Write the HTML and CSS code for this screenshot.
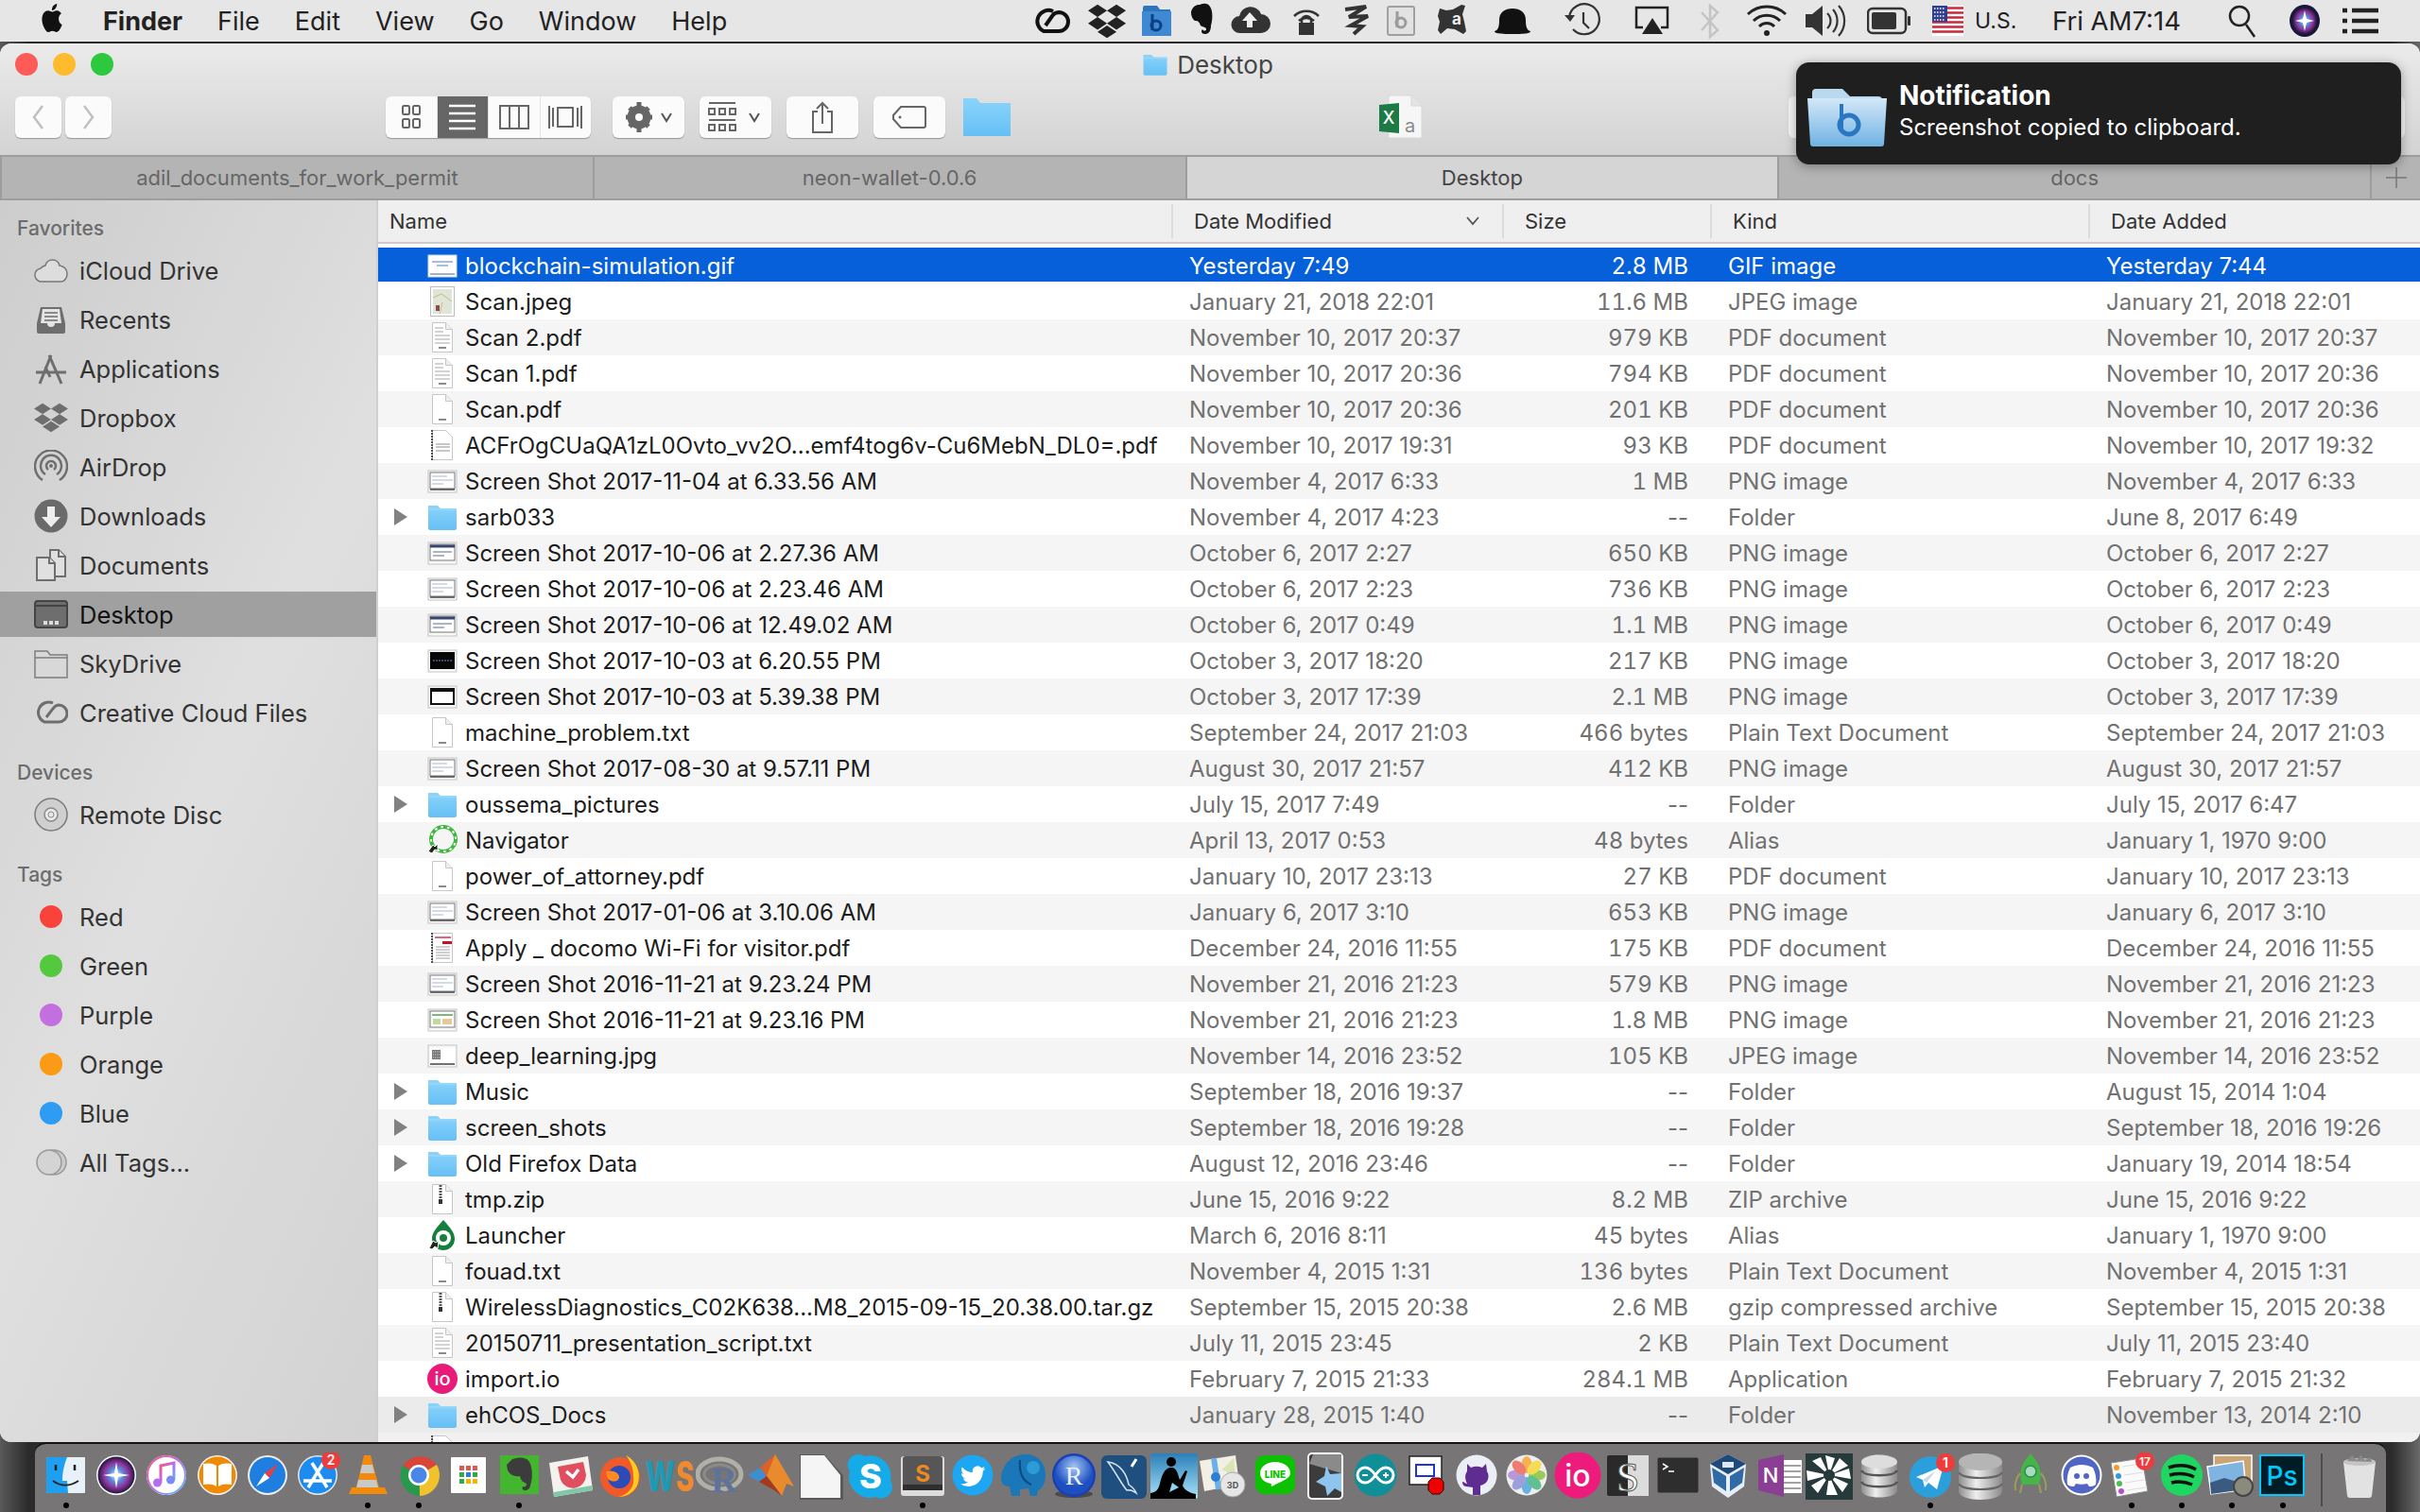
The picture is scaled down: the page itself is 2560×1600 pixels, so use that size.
FILE: index.html
```html
<!DOCTYPE html>
<html lang="en">
<head>
    <meta charset="UTF-8">
    <title>Desktop</title>
    <link rel="stylesheet" href="styles.css">
</head>
<body>
<svg class="defs" width="0" height="0">
    <defs>
        <linearGradient id="g-folder" x1="0" y1="0" x2="0" y2="1"><stop offset="0" stop-color="#8ad4fb"/><stop offset="1" stop-color="#66bff5"/></linearGradient>
        <linearGradient id="g-banner" x1="0" y1="0" x2="0" y2="1"><stop offset="0" stop-color="#d3e8f7"/><stop offset="1" stop-color="#6fb2e4"/></linearGradient>
        <linearGradient id="g-silver" x1="0" y1="0" x2="1" y2="0"><stop offset="0" stop-color="#8d8d8d"/><stop offset=".4" stop-color="#efefef"/><stop offset="1" stop-color="#8a8a8a"/></linearGradient>
        <linearGradient id="g-ring" x1="0" y1="0" x2="1" y2="1"><stop offset="0" stop-color="#f7567a"/><stop offset=".5" stop-color="#b76cf0"/><stop offset="1" stop-color="#4fc3f7"/></linearGradient>
        <linearGradient id="g-sky" x1="0" y1="0" x2="0" y2="1"><stop offset="0" stop-color="#2b7fb8"/><stop offset="1" stop-color="#a9e4fb"/></linearGradient>
        <radialGradient id="g-siri"><stop offset="0" stop-color="#eaf6ff"/><stop offset=".35" stop-color="#5a8fe0"/><stop offset=".7" stop-color="#8c2f96"/><stop offset="1" stop-color="#1c1a3a"/></radialGradient>
        <radialGradient id="g-rball" cx=".5" cy=".3"><stop offset="0" stop-color="#a8c8f5"/><stop offset="1" stop-color="#1d4fc0"/></radialGradient>
    </defs>
    <symbol id="folder" viewBox="0 0 36 36"><path d="M3 6h10l3 3h17v21a2 2 0 0 1-2 2H5a2 2 0 0 1-2-2z" fill="url(#g-folder)"/><path d="M3 10h30" stroke="#a5dcfb" stroke-width="1"/></symbol>
    <symbol id="doc" viewBox="0 0 36 36"><path d="M7.500 2.500h14l7 7v24h-21z" fill="#fff" stroke="#c6c6c6"/><path d="M21.500 2.500v7h7" fill="#efefef" stroke="#c6c6c6"/><path d="M14 29h8" stroke="#8a8a8a" stroke-width="2"/></symbol>
    <symbol id="doc-text" viewBox="0 0 36 36"><path d="M7.500 2.500h14l7 7v24h-21z" fill="#fff" stroke="#c6c6c6"/><path d="M21.500 2.500v7h7" fill="#efefef" stroke="#c6c6c6"/><path d="M10 8h9M10 12h9M10 16h16M10 20h16M10 24h16" stroke="#a6a6a6"/><path d="M14 29h8" stroke="#8a8a8a" stroke-width="2"/></symbol>
    <symbol id="doc-bound" viewBox="0 0 36 36"><path d="M7.500 2.500h14l7 7v24h-21z" fill="#fff" stroke="#c6c6c6"/><path d="M7 2v32" stroke="#222" stroke-width="1.500" stroke-dasharray="2 1"/><path d="M11 17h15M11 20h15M11 24h15" stroke="#8f8f8f"/></symbol>
    <symbol id="doc-red" viewBox="0 0 36 36"><path d="M7.500 2.500h21v31h-21z" fill="#fff" stroke="#c6c6c6"/><path d="M7 2v32" stroke="#222" stroke-width="1.500" stroke-dasharray="2 1"/><path d="M10 6h17v2H10z" fill="#e0657a"/><path d="M18 11h10v3H18z" fill="#c8102e"/><path d="M11 17h15M11 20h15M11 23h15M11 26h15M11 29h15" stroke="#a0a0a0"/></symbol>
    <symbol id="zip" viewBox="0 0 36 36"><path d="M7.500 2.500h14l7 7v24h-21z" fill="#fff" stroke="#c6c6c6"/><path d="M21.500 2.500v7h7" fill="#efefef" stroke="#c6c6c6"/><path d="M16 3v19" stroke="#555" stroke-width="3" stroke-dasharray="2 1"/><rect x="14" y="18" width="4" height="5" fill="#333"/></symbol>
    <symbol id="shot" viewBox="0 0 36 36"><rect x="3" y="7" width="30" height="23" fill="#f7f7f7" stroke="#c4c4c4"/><rect x="5" y="9" width="26" height="17" fill="#fff" stroke="#777"/><path d="M7 13h16M7 17h22M7 21h12" stroke="#d3dbe8" stroke-width="2"/><path d="M5 27h26" stroke="#444" stroke-width="1.500"/></symbol>
    <symbol id="shot-blue" viewBox="0 0 36 36"><rect x="3" y="7" width="30" height="23" fill="#f7f7f7" stroke="#c4c4c4"/><rect x="5" y="9" width="26" height="17" fill="#fff" stroke="#777"/><path d="M5 11h26" stroke="#39456f" stroke-width="3"/><path d="M8 17h20M8 21h12" stroke="#aab4c8" stroke-width="2"/></symbol>
    <symbol id="shot-dark" viewBox="0 0 36 36"><rect x="3" y="7" width="30" height="23" fill="#f7f7f7" stroke="#c4c4c4"/><rect x="5" y="9" width="26" height="18" fill="#060606"/><path d="M8 18h20" stroke="#3a4a66" stroke-width="2" stroke-dasharray="2 1"/></symbol>
    <symbol id="shot-frame" viewBox="0 0 36 36"><rect x="3" y="7" width="30" height="23" fill="#f7f7f7" stroke="#c4c4c4"/><rect x="6" y="10" width="24" height="16" fill="#fff" stroke="#111" stroke-width="2"/><path d="M6 12h24" stroke="#111" stroke-width="2"/></symbol>
    <symbol id="shot-green" viewBox="0 0 36 36"><rect x="3" y="7" width="30" height="23" fill="#f7f7f7" stroke="#c4c4c4"/><rect x="5" y="9" width="26" height="17" fill="#fff" stroke="#777"/><path d="M7 13h22" stroke="#7ab87a" stroke-width="2"/><path d="M8 17h8v6H8z" fill="#c2d99c"/><path d="M18 17h10v6H18z" fill="#e8c89a"/></symbol>
    <symbol id="shot-deep" viewBox="0 0 36 36"><rect x="3" y="7" width="30" height="23" fill="#f7f7f7" stroke="#c4c4c4"/><rect x="5" y="10" width="26" height="15" fill="#fff"/><path d="M7 12h9v10H7z" fill="#777"/><path d="M8 14h7M8 17h7M8 20h7" stroke="#ddd" stroke-dasharray="1 1"/><path d="M5 27h26" stroke="#444" stroke-width="1.500"/></symbol>
    <symbol id="gif" viewBox="0 0 36 36"><rect x="3" y="7" width="30" height="23" fill="#fff" stroke="#cfd7e8"/><path d="M7 14h22M12 18h12" stroke="#a9bde0" stroke-width="2"/><path d="M5 27h26" stroke="#8696b5" stroke-width="1.500"/></symbol>
    <symbol id="jpeg" viewBox="0 0 36 36"><rect x="5.500" y="2.500" width="25" height="31" fill="#fff" stroke="#bdbdbd"/><rect x="8" y="5" width="20" height="26" fill="#dfe6d5"/><path d="M8 14l9-4 11 8M15 31l3-12" fill="none" stroke="#c9b88f"/><rect x="11" y="22" width="4" height="6" fill="#8a4c52"/></symbol>
    <symbol id="navigator" viewBox="0 0 36 36"><circle cx="19" cy="17" r="13" fill="none" stroke="#3cb83c" stroke-width="4"/><circle cx="19" cy="17" r="13" fill="none" stroke="#fff" stroke-width="2" stroke-dasharray="2 3" pathLength="60" stroke-dashoffset="22"/><path d="M3 30l5-7 2 2 3-3v7l-3-1-3 4z" fill="#222" stroke="#fff"/></symbol>
    <symbol id="launcher" viewBox="0 0 36 36"><path d="M19 2c7 8 12 13 12 20a12 12 0 0 1-24 0c0-7 5-12 12-20z" fill="#15803d"/><circle cx="19" cy="21" r="8" fill="#fff"/><circle cx="19" cy="21" r="4" fill="#15803d"/><path d="M4 32l4-8 3 2 3-2-1 8-3-2-3 3z" fill="#222" stroke="#fff"/></symbol>
</svg>

<header class="menubar">
    <svg class="apple" width="26" height="30" viewBox="0 0 24 24" preserveAspectRatio="none"><path fill="#111" d="M12.152 6.896c-.948 0-2.415-1.078-3.96-1.04-2.04.027-3.91 1.183-4.961 3.014-2.117 3.675-.546 9.103 1.519 12.09 1.013 1.454 2.208 3.09 3.792 3.039 1.52-.065 2.09-.987 3.935-.987 1.831 0 2.35.987 3.96.948 1.637-.026 2.676-1.48 3.676-2.948 1.156-1.688 1.636-3.325 1.662-3.415-.039-.013-3.182-1.221-3.22-4.857-.026-3.04 2.48-4.494 2.597-4.559-1.429-2.09-3.623-2.324-4.39-2.376-2-.156-3.675 1.09-4.61 1.09zM15.53 3.83c.843-1.012 1.4-2.427 1.245-3.83-1.207.052-2.662.805-3.532 1.818-.78.896-1.454 2.338-1.273 3.714 1.338.104 2.715-.688 3.559-1.701"/></svg>
    <span class="menu-app">Finder</span>
    <span class="menu-item">File</span>
    <span class="menu-item">Edit</span>
    <span class="menu-item">View</span>
    <span class="menu-item">Go</span>
    <span class="menu-item">Window</span>
    <span class="menu-item">Help</span>

    <div class="status">
        <svg width="59" height="44" viewBox="0 0 59 44"><path d="M22 12A11 11 0 1 0 12 33h16a10 10 0 0 0 0-20 9 9 0 0 0-7 4l-7 10" fill="none" stroke="#111" stroke-width="4"/></svg>
        <svg width="57" height="44" viewBox="0 0 57 44"><path fill="#222" transform="translate(0 1.500) scale(1.670 1.750)" d="M6 1.807L0 5.629l6 3.822 6.001-3.822L6 1.807zM18 1.807l-6 3.822 6 3.822 6-3.822-6-3.822zM0 13.274l6 3.822 6.001-3.822L6 9.452l-6 3.822zM18 9.452l-6 3.822 6 3.822 6-3.822-6-3.822zM6 18.371l6.001 3.822 6-3.822-6-3.822L6 18.371z"/></svg>
        <svg width="49" height="44" viewBox="0 0 49 44"><path d="M1 8a2 2 0 0 1 2-2h13l3 4h11v27a1 1 0 0 1-1 1H1z" fill="#2f75bd"/><path d="M0 12h31v26H0z" fill="#3f88d2"/><path d="M11 15v17" stroke="#0c3f86" stroke-width="3"/><circle cx="15" cy="27" r="5" fill="none" stroke="#0c3f86" stroke-width="3"/></svg>
        <svg width="45" height="44" viewBox="0 0 45 44"><path d="M3 13c0-3 4-9 9-8 4-2 9-2 11 2 3 4 3 13 1 20 0 5-2 9-6 9-4 0-5-3-3-5 1 2 4 2 4 0 0-3-4-2-6-4-1-3-2-5-6-5-3-2-4-6-4-9z" fill="#111"/></svg>
        <svg width="65" height="44" viewBox="0 0 65 44"><path d="M10 35a9 9 0 0 1-1-18 12 12 0 0 1 23-2 10 10 0 0 1 0 20z" fill="#333"/><path d="M20 13l8 9h-5v7h-6v-7h-5z" fill="#eee"/></svg>
        <svg width="53" height="44" viewBox="0 0 53 44"><g fill="none" stroke="#333" stroke-width="2.500"><path d="M2 17a19 19 0 0 1 26 0M7 22a12 12 0 0 1 16 0"/><path d="M10 25v-3a5 5 0 0 1 10 0v3"/></g><rect x="7" y="24" width="16" height="13" fill="#333"/></svg>
        <svg width="47" height="44" viewBox="0 0 47 44"><path d="M3 10l22-3-18 11 20-1-18 10 12 1-9 8" fill="none" stroke="#333" stroke-width="4"/></svg>
        <svg width="52" height="44" viewBox="0 0 52 44"><rect x="1" y="7" width="28" height="30" rx="2" fill="#e2e2e2" stroke="#a0a0a0" stroke-width="2"/><path d="M11 12v17" stroke="#9b9b9b" stroke-width="3"/><circle cx="15" cy="24" r="5" fill="none" stroke="#9b9b9b" stroke-width="3"/></svg>
        <svg width="62" height="44" viewBox="0 0 62 44"><path d="M4 9l7 2 7-1 9-5 4 1-3 9 2 8 2 10-3 3-9-5-8-1-7 6-3-4 2-9-2-6z" fill="#333"/><text x="17" y="26" class="avast">a</text></svg>
        <svg width="74" height="44" viewBox="0 0 74 44"><path d="M0 33c4-1 5-5 5-12 0-8 6-12 14-12s14 4 14 12c0 7 1 11 5 12 0 2-3 3-19 3S0 35 0 33z" fill="#111"/></svg>
        <svg width="74" height="44" viewBox="0 0 74 44"><g fill="none" stroke="#333" stroke-width="2.200"><path d="M5 18a16 16 0 1 1 4 13"/><path d="M20 13v11l6 6"/></g><path d="M0 16h11l-5 7z" fill="#333"/></svg>
        <svg width="68" height="44" viewBox="0 0 68 44"><path d="M9 29H2V8h33v21h-7" fill="none" stroke="#222" stroke-width="2.500"/><path d="M19 19l11 17H8z" fill="#222"/></svg>
        <svg width="50" height="44" viewBox="0 0 50 44"><path d="M3 13l17 19-8 7V6l8 7L3 32" fill="none" stroke="#c4c4c4" stroke-width="2.500"/></svg>
        <svg width="62" height="44" viewBox="0 0 62 44"><g fill="none" stroke="#222" stroke-width="3"><path d="M2 15a29 29 0 0 1 40 0M8 22a20 20 0 0 1 28 0M14 28a11 11 0 0 1 16 0"/></g><circle cx="22" cy="35" r="3" fill="#222"/></svg>
        <svg width="66" height="44" viewBox="0 0 66 44"><path d="M1 15h7l11-9v32l-11-9H1z" fill="#333"/><g fill="none" stroke="#333" stroke-width="2.200"><path d="M24 14a11 11 0 0 1 0 16M30 10a18 18 0 0 1 0 24M36 6a24 24 0 0 1 0 32"/></g></svg>
        <svg width="69" height="44" viewBox="0 0 69 44"><rect x="1" y="9" width="40" height="26" rx="5" fill="none" stroke="#333" stroke-width="2.500"/><rect x="5" y="13" width="26" height="18" rx="2" fill="#333"/><rect x="43" y="17" width="3" height="10" rx="1" fill="#333"/></svg>
        <svg class="flag" width="33" height="32" viewBox="0 0 33 32"><rect width="33" height="32" fill="#fff"/><path d="M0 2.500h33M0 7.500h33M0 12.500h33M0 17.500h33M0 22.500h33M0 27.500h33" stroke="#c8283c" stroke-width="2.600"/><rect width="16" height="17" fill="#2f3f8e"/><path d="M2 3h12M2 7h12M2 11h12M2 15h12" stroke="#fff" stroke-width="1.400" stroke-dasharray="1.500 1.500"/></svg>
        <span class="menu-lang">U.S.</span>
        <span class="menu-clock">Fri AM7:14</span>
        <svg class="menu-search" width="30" height="36" viewBox="0 0 30 36"><g fill="none" stroke="#222" stroke-width="2.500"><circle cx="12" cy="13" r="10"/><path d="M19 22l9 13"/></g></svg>
        <svg class="menu-siri" width="34" height="36" viewBox="0 0 34 36"><ellipse cx="17" cy="18" rx="16" ry="17" fill="#18183a"/><ellipse cx="17" cy="18" rx="13" ry="14" fill="url(#g-siri)"/><path d="M17 7l2 9 8 2-8 2-2 9-2-9-8-2 8-2z" fill="#fff"/></svg>
        <svg class="menu-list" width="38" height="30" viewBox="0 0 38 30"><path d="M10 4h28M10 15h28M10 26h28" stroke="#222" stroke-width="4.500"/><path d="M0 4h5M0 15h5M0 26h5" stroke="#222" stroke-width="4.500"/></svg>
    </div>
</header>

<main class="window">
    <div class="titlebar">
        <div class="title-row">
            <div class="lights"><i class="light red"></i><i class="light yellow"></i><i class="light green"></i></div>
            <div class="title"><svg width="30" height="30"><use href="#folder"/></svg><span>Desktop</span></div>
        </div>
        <div class="toolbar">
            <div class="tool nav"><svg width="49" height="44" viewBox="0 0 49 44"><path d="M29 10L20 22l9 12" fill="none" stroke="#c0c0c0" stroke-width="2.500"/></svg></div>
            <div class="tool nav"><svg width="49" height="44" viewBox="0 0 49 44"><path d="M20 10l9 12-9 12" fill="none" stroke="#c0c0c0" stroke-width="2.500"/></svg></div>
            <div class="tool views">
                <span class="view"><svg width="20" height="28" viewBox="0 0 20 28"><g fill="none" stroke="#666" stroke-width="2"><rect x="1" y="2" width="7" height="9" rx="1.500"/><rect x="12" y="2" width="7" height="9" rx="1.500"/><rect x="1" y="16" width="7" height="9" rx="1.500"/><rect x="12" y="16" width="7" height="9" rx="1.500"/></g></svg></span>
                <span class="view on"><svg width="30" height="30" viewBox="0 0 30 30"><path d="M1 3h28M1 11h28M1 19h28M1 27h28" stroke="#fff" stroke-width="2.500"/></svg></span>
                <span class="view"><svg width="32" height="28" viewBox="0 0 32 28"><g fill="none" stroke="#666" stroke-width="2"><rect x="1" y="2" width="30" height="24"/><path d="M11 2v24M21 2v24"/></g></svg></span>
                <span class="view"><svg width="38" height="28" viewBox="0 0 38 28"><g fill="none" stroke="#666" stroke-width="2"><rect x="11" y="4" width="16" height="20"/><path d="M2 2v24M6 4v20M32 4v20M36 2v24"/></g></svg></span>
            </div>
            <div class="tool act gear">
                <svg width="54" height="34" viewBox="0 0 54 34"><circle cx="17" cy="17" r="9.500" fill="none" stroke="#666" stroke-width="6"/><path d="M17 1v32M3 17h28M7 7l20 20M27 7L7 27" stroke="#666" stroke-width="5"/><circle cx="17" cy="17" r="4" fill="#fbfbfb"/><path d="M41 13l5 8 5-8" fill="none" stroke="#555" stroke-width="2"/></svg>
            </div>
            <div class="tool act">
                <svg width="58" height="34" viewBox="0 0 58 34"><g fill="none" stroke="#666" stroke-width="2"><path d="M1 2h28"/><rect x="1" y="8" width="6" height="6"/><rect x="12" y="8" width="6" height="6"/><rect x="23" y="8" width="6" height="6"/><path d="M1 20h28"/><rect x="1" y="25" width="6" height="6"/><rect x="12" y="25" width="6" height="6"/><rect x="23" y="25" width="6" height="6"/></g><path d="M44 13l5 8 5-8" fill="none" stroke="#555" stroke-width="2"/></svg>
            </div>
            <div class="tool act"><svg width="24" height="34" viewBox="0 0 24 34"><path d="M7 11H2v22h20V11h-5M12 24V2M6 8l6-6 6 6" fill="none" stroke="#666" stroke-width="2"/></svg></div>
            <div class="tool act"><svg width="36" height="26" viewBox="0 0 36 26"><path d="M9 2h24a2 2 0 0 1 2 2v18a2 2 0 0 1-2 2H9l-8-9v-4z" fill="none" stroke="#666" stroke-width="2"/><circle cx="8" cy="13" r="1.500" fill="#666"/></svg></div>
            <svg class="tool-folder" width="52" height="40" viewBox="0 0 52 40"><path d="M1 0h14l4 5h32v35H1z" fill="url(#g-folder)"/></svg>
            <svg class="tool-excel" width="46" height="48" viewBox="0 0 46 48"><path d="M10 1h24l11 11v34H10z" fill="#f6f6f6" stroke="#d8d8d8"/><path d="M34 1v11h11" fill="#e4e4e4" stroke="#d8d8d8"/><path d="M0 11l21-2v32L0 39z" fill="#1d7a45"/><text x="10" y="31" class="xl-x" text-anchor="middle">X</text><text x="27" y="40" class="xl-a">a</text></svg>
            <div class="search"></div>
        </div>
    </div>

    <nav class="tabs">
        <div class="tab">adil_documents_for_work_permit</div>
        <div class="tab">neon-wallet-0.0.6</div>
        <div class="tab active">Desktop</div>
        <div class="tab">docs</div>
        <div class="tab add"><svg width="22" height="22" viewBox="0 0 22 22"><path d="M11 0v22M0 11h22" stroke="#777" stroke-width="1.500"/></svg></div>
    </nav>

    <div class="content">
        <aside class="sidebar">
            <h3>Favorites</h3>
            <div class="side-item"><svg viewBox="0 0 36 36"><path d="M9 30a7 7 0 0 1-2-14 8 8 0 0 1 5-3c2-8 13-8 15 0 6 1 8 5 8 9s-3 8-6 8z" fill="#ddd" stroke="#777" stroke-width="1.500"/></svg><span>iCloud Drive</span></div>
            <div class="side-item"><svg viewBox="0 0 36 36"><path d="M3 22l4-17h22l4 17v9a2 2 0 0 1-2 2H5a2 2 0 0 1-2-2z" fill="#6e6e6e"/><path d="M9 7h18l2 15h-7a4 4 0 0 1-8 0H7z" fill="#e4e4e4"/><path d="M11 11h14M11 15h14M11 19h14" stroke="#6e6e6e" stroke-width="1.500"/></svg><span>Recents</span></div>
            <div class="side-item"><svg viewBox="0 0 36 36"><path d="M18 4L6 34M16 4l13 30M2 22h32M12 16l5 11" fill="none" stroke="#6e6e6e" stroke-width="3"/></svg><span>Applications</span></div>
            <div class="side-item"><svg viewBox="0 0 24 24"><path fill="#6e6e6e" d="M6 1.807L0 5.629l6 3.822 6.001-3.822L6 1.807zM18 1.807l-6 3.822 6 3.822 6-3.822-6-3.822zM0 13.274l6 3.822 6.001-3.822L6 9.452l-6 3.822zM18 9.452l-6 3.822 6 3.822 6-3.822-6-3.822zM6 18.371l6.001 3.822 6-3.822-6-3.822L6 18.371z"/></svg><span>Dropbox</span></div>
            <div class="side-item"><svg viewBox="0 0 36 36"><g fill="none" stroke="#6e6e6e" stroke-width="2.500"><path d="M9 32a17 17 0 1 1 18 0M12 26a11 11 0 1 1 12 0M15 21a5 5 0 1 1 6 0"/></g><circle cx="18" cy="17" r="2" fill="#6e6e6e"/></svg><span>AirDrop</span></div>
            <div class="side-item"><svg viewBox="0 0 36 36"><circle cx="18" cy="18" r="17.500" fill="#6a6a6a"/><path d="M14 8h8v11h6L18 30 8 19h6z" fill="#eee"/></svg><span>Downloads</span></div>
            <div class="side-item"><svg viewBox="0 0 36 36"><g fill="#e0e0e0" stroke="#6e6e6e" stroke-width="2"><path d="M17 2h9l7 7v21H17z"/><path d="M3 10h13l6 6v18H3z"/><path d="M16 10v6h6M26 2v7h7"/></g></svg><span>Documents</span></div>
            <div class="side-item selected"><svg viewBox="0 0 36 36"><rect x="1" y="4" width="34" height="28" rx="3" fill="#6e6e6e" stroke="#444" stroke-width="2"/><path d="M1 9h34" stroke="#444" stroke-width="2"/><path d="M10 25h4v4h-4zM16 25h4v4h-4zM22 25h4v4h-4z" fill="#ddd"/></svg><span>Desktop</span></div>
            <div class="side-item"><svg viewBox="0 0 36 36"><path d="M1 5h13l3 4h18v24H1z" fill="#d8d8d8" stroke="#7e7e7e" stroke-width="1.500"/><path d="M1 12h34" stroke="#7e7e7e" stroke-width="1.500"/></svg><span>SkyDrive</span></div>
            <div class="side-item"><svg viewBox="0 0 36 36"><path d="M20 8A10 10 0 1 0 11 28h15a9 9 0 0 0 0-18 8 8 0 0 0-6 4l-7 9" fill="none" stroke="#6e6e6e" stroke-width="3"/></svg><span>Creative Cloud Files</span></div>
            <h3 class="gap">Devices</h3>
            <div class="side-item"><svg viewBox="0 0 36 36"><circle cx="18" cy="18" r="17" fill="#cfcfcf" stroke="#7a7a7a" stroke-width="1.500"/><circle cx="18" cy="18" r="7" fill="#e8e8e8" stroke="#8a8a8a" stroke-width="1.500"/><circle cx="18" cy="18" r="3" fill="none" stroke="#8a8a8a"/></svg><span>Remote Disc</span></div>
            <h3 class="gap">Tags</h3>
            <div class="side-item"><i class="tag t-red"></i><span>Red</span></div>
            <div class="side-item"><i class="tag t-green"></i><span>Green</span></div>
            <div class="side-item"><i class="tag t-purple"></i><span>Purple</span></div>
            <div class="side-item"><i class="tag t-orange"></i><span>Orange</span></div>
            <div class="side-item"><i class="tag t-blue"></i><span>Blue</span></div>
            <div class="side-item"><svg viewBox="0 0 36 36"><circle cx="21" cy="18" r="13" fill="#ccc" stroke="#999" stroke-width="1.500"/><circle cx="16" cy="18" r="13" fill="#d4d4d4" stroke="#999" stroke-width="1.500"/></svg><span>All Tags...</span></div>
        </aside>

        <section class="listing">
            <div class="head">
                <div class="hc name">Name</div>
                <div class="hc date">Date Modified<svg width="14" height="10" viewBox="0 0 14 10"><path d="M1 1l6 7 6-7" fill="none" stroke="#555" stroke-width="1.800"/></svg></div>
                <div class="hc size">Size</div>
                <div class="hc kind">Kind</div>
                <div class="hc added">Date Added</div>
            </div>
            <div class="rows">
                <div class="row sel"><div class="name"><span class="tw"></span><svg class="fi"><use href="#gif"/></svg><span>blockchain-simulation.gif</span></div><div>Yesterday 7:49</div><div class="num">2.8 MB</div><div>GIF image</div><div>Yesterday 7:44</div></div>
                <div class="row"><div class="name"><span class="tw"></span><svg class="fi"><use href="#jpeg"/></svg><span>Scan.jpeg</span></div><div>January 21, 2018 22:01</div><div class="num">11.6 MB</div><div>JPEG image</div><div>January 21, 2018 22:01</div></div>
                <div class="row"><div class="name"><span class="tw"></span><svg class="fi"><use href="#doc-text"/></svg><span>Scan 2.pdf</span></div><div>November 10, 2017 20:37</div><div class="num">979 KB</div><div>PDF document</div><div>November 10, 2017 20:37</div></div>
                <div class="row"><div class="name"><span class="tw"></span><svg class="fi"><use href="#doc-text"/></svg><span>Scan 1.pdf</span></div><div>November 10, 2017 20:36</div><div class="num">794 KB</div><div>PDF document</div><div>November 10, 2017 20:36</div></div>
                <div class="row"><div class="name"><span class="tw"></span><svg class="fi"><use href="#doc"/></svg><span>Scan.pdf</span></div><div>November 10, 2017 20:36</div><div class="num">201 KB</div><div>PDF document</div><div>November 10, 2017 20:36</div></div>
                <div class="row"><div class="name"><span class="tw"></span><svg class="fi"><use href="#doc-bound"/></svg><span>ACFrOgCUaQA1zL0Ovto_vv2O...emf4tog6v-Cu6MebN_DL0=.pdf</span></div><div>November 10, 2017 19:31</div><div class="num">93 KB</div><div>PDF document</div><div>November 10, 2017 19:32</div></div>
                <div class="row"><div class="name"><span class="tw"></span><svg class="fi"><use href="#shot"/></svg><span>Screen Shot 2017-11-04 at 6.33.56 AM</span></div><div>November 4, 2017 6:33</div><div class="num">1 MB</div><div>PNG image</div><div>November 4, 2017 6:33</div></div>
                <div class="row"><div class="name"><span class="tw more"></span><svg class="fi"><use href="#folder"/></svg><span>sarb033</span></div><div>November 4, 2017 4:23</div><div class="num dash">--</div><div>Folder</div><div>June 8, 2017 6:49</div></div>
                <div class="row"><div class="name"><span class="tw"></span><svg class="fi"><use href="#shot-blue"/></svg><span>Screen Shot 2017-10-06 at 2.27.36 AM</span></div><div>October 6, 2017 2:27</div><div class="num">650 KB</div><div>PNG image</div><div>October 6, 2017 2:27</div></div>
                <div class="row"><div class="name"><span class="tw"></span><svg class="fi"><use href="#shot"/></svg><span>Screen Shot 2017-10-06 at 2.23.46 AM</span></div><div>October 6, 2017 2:23</div><div class="num">736 KB</div><div>PNG image</div><div>October 6, 2017 2:23</div></div>
                <div class="row"><div class="name"><span class="tw"></span><svg class="fi"><use href="#shot-blue"/></svg><span>Screen Shot 2017-10-06 at 12.49.02 AM</span></div><div>October 6, 2017 0:49</div><div class="num">1.1 MB</div><div>PNG image</div><div>October 6, 2017 0:49</div></div>
                <div class="row"><div class="name"><span class="tw"></span><svg class="fi"><use href="#shot-dark"/></svg><span>Screen Shot 2017-10-03 at 6.20.55 PM</span></div><div>October 3, 2017 18:20</div><div class="num">217 KB</div><div>PNG image</div><div>October 3, 2017 18:20</div></div>
                <div class="row"><div class="name"><span class="tw"></span><svg class="fi"><use href="#shot-frame"/></svg><span>Screen Shot 2017-10-03 at 5.39.38 PM</span></div><div>October 3, 2017 17:39</div><div class="num">2.1 MB</div><div>PNG image</div><div>October 3, 2017 17:39</div></div>
                <div class="row"><div class="name"><span class="tw"></span><svg class="fi"><use href="#doc"/></svg><span>machine_problem.txt</span></div><div>September 24, 2017 21:03</div><div class="num">466 bytes</div><div>Plain Text Document</div><div>September 24, 2017 21:03</div></div>
                <div class="row"><div class="name"><span class="tw"></span><svg class="fi"><use href="#shot"/></svg><span>Screen Shot 2017-08-30 at 9.57.11 PM</span></div><div>August 30, 2017 21:57</div><div class="num">412 KB</div><div>PNG image</div><div>August 30, 2017 21:57</div></div>
                <div class="row"><div class="name"><span class="tw more"></span><svg class="fi"><use href="#folder"/></svg><span>oussema_pictures</span></div><div>July 15, 2017 7:49</div><div class="num dash">--</div><div>Folder</div><div>July 15, 2017 6:47</div></div>
                <div class="row"><div class="name"><span class="tw"></span><svg class="fi"><use href="#navigator"/></svg><span>Navigator</span></div><div>April 13, 2017 0:53</div><div class="num">48 bytes</div><div>Alias</div><div>January 1, 1970 9:00</div></div>
                <div class="row"><div class="name"><span class="tw"></span><svg class="fi"><use href="#doc"/></svg><span>power_of_attorney.pdf</span></div><div>January 10, 2017 23:13</div><div class="num">27 KB</div><div>PDF document</div><div>January 10, 2017 23:13</div></div>
                <div class="row"><div class="name"><span class="tw"></span><svg class="fi"><use href="#shot"/></svg><span>Screen Shot 2017-01-06 at 3.10.06 AM</span></div><div>January 6, 2017 3:10</div><div class="num">653 KB</div><div>PNG image</div><div>January 6, 2017 3:10</div></div>
                <div class="row"><div class="name"><span class="tw"></span><svg class="fi"><use href="#doc-red"/></svg><span>Apply _ docomo Wi-Fi for visitor.pdf</span></div><div>December 24, 2016 11:55</div><div class="num">175 KB</div><div>PDF document</div><div>December 24, 2016 11:55</div></div>
                <div class="row"><div class="name"><span class="tw"></span><svg class="fi"><use href="#shot"/></svg><span>Screen Shot 2016-11-21 at 9.23.24 PM</span></div><div>November 21, 2016 21:23</div><div class="num">579 KB</div><div>PNG image</div><div>November 21, 2016 21:23</div></div>
                <div class="row"><div class="name"><span class="tw"></span><svg class="fi"><use href="#shot-green"/></svg><span>Screen Shot 2016-11-21 at 9.23.16 PM</span></div><div>November 21, 2016 21:23</div><div class="num">1.8 MB</div><div>PNG image</div><div>November 21, 2016 21:23</div></div>
                <div class="row"><div class="name"><span class="tw"></span><svg class="fi"><use href="#shot-deep"/></svg><span>deep_learning.jpg</span></div><div>November 14, 2016 23:52</div><div class="num">105 KB</div><div>JPEG image</div><div>November 14, 2016 23:52</div></div>
                <div class="row"><div class="name"><span class="tw more"></span><svg class="fi"><use href="#folder"/></svg><span>Music</span></div><div>September 18, 2016 19:37</div><div class="num dash">--</div><div>Folder</div><div>August 15, 2014 1:04</div></div>
                <div class="row"><div class="name"><span class="tw more"></span><svg class="fi"><use href="#folder"/></svg><span>screen_shots</span></div><div>September 18, 2016 19:28</div><div class="num dash">--</div><div>Folder</div><div>September 18, 2016 19:26</div></div>
                <div class="row"><div class="name"><span class="tw more"></span><svg class="fi"><use href="#folder"/></svg><span>Old Firefox Data</span></div><div>August 12, 2016 23:46</div><div class="num dash">--</div><div>Folder</div><div>January 19, 2014 18:54</div></div>
                <div class="row"><div class="name"><span class="tw"></span><svg class="fi"><use href="#zip"/></svg><span>tmp.zip</span></div><div>June 15, 2016 9:22</div><div class="num">8.2 MB</div><div>ZIP archive</div><div>June 15, 2016 9:22</div></div>
                <div class="row"><div class="name"><span class="tw"></span><svg class="fi"><use href="#launcher"/></svg><span>Launcher</span></div><div>March 6, 2016 8:11</div><div class="num">45 bytes</div><div>Alias</div><div>January 1, 1970 9:00</div></div>
                <div class="row"><div class="name"><span class="tw"></span><svg class="fi"><use href="#doc"/></svg><span>fouad.txt</span></div><div>November 4, 2015 1:31</div><div class="num">136 bytes</div><div>Plain Text Document</div><div>November 4, 2015 1:31</div></div>
                <div class="row"><div class="name"><span class="tw"></span><svg class="fi"><use href="#zip"/></svg><span>WirelessDiagnostics_C02K638...M8_2015-09-15_20.38.00.tar.gz</span></div><div>September 15, 2015 20:38</div><div class="num">2.6 MB</div><div>gzip compressed archive</div><div>September 15, 2015 20:38</div></div>
                <div class="row"><div class="name"><span class="tw"></span><svg class="fi"><use href="#doc-text"/></svg><span>20150711_presentation_script.txt</span></div><div>July 11, 2015 23:45</div><div class="num">2 KB</div><div>Plain Text Document</div><div>July 11, 2015 23:40</div></div>
                <div class="row"><div class="name"><span class="tw"></span><svg class="fi" viewBox="0 0 36 36"><circle cx="18" cy="18" r="16" fill="#ea1a78"/><text x="18" y="25" class="io-mark" text-anchor="middle">io</text></svg><span>import.io</span></div><div>February 7, 2015 21:33</div><div class="num">284.1 MB</div><div>Application</div><div>February 7, 2015 21:32</div></div>
                <div class="row last"><div class="name"><span class="tw more"></span><svg class="fi"><use href="#folder"/></svg><span>ehCOS_Docs</span></div><div>January 28, 2015 1:40</div><div class="num dash">--</div><div>Folder</div><div>November 13, 2014 2:10</div></div>
                <div class="row tail"><div class="name"><span class="tw"></span><svg class="fi"><use href="#doc-bound"/></svg></div></div>
            </div>
        </section>
    </div>
</main>

<footer class="dock">
    <div class="app run"><svg viewBox="0 0 54 50"><rect x="6" y="5" width="41" height="38" rx="1" fill="#e9f1f8"/><path d="M6 6a1 1 0 0 1 1-1h21c-4 10-5 18-5 25h5l1 13H7a1 1 0 0 1-1-1z" fill="#1e9ff0"/><path d="M16 13v6M36 13v6" stroke="#222" stroke-width="2.500"/><path d="M13 30c8 6 18 6 27 0" fill="none" stroke="#222" stroke-width="2"/></svg></div>
    <div class="app"><svg viewBox="0 0 54 50"><circle cx="27" cy="24" r="21" fill="#fff"/><circle cx="27" cy="24" r="19.500" fill="url(#g-siri)"/><path d="M27 10l2 12 12 2-12 2-2 12-2-12-12-2 12-2z" fill="#fff"/></svg></div>
    <div class="app"><svg viewBox="0 0 54 50"><circle cx="27" cy="24" r="21" fill="#fff"/><circle cx="27" cy="24" r="20" fill="none" stroke="url(#g-ring)" stroke-width="2"/><path d="M21 32V14l14-3v18" fill="none" stroke="url(#g-ring)" stroke-width="3"/><circle cx="17.500" cy="32" r="4.500" fill="#b76cf0"/><circle cx="31.500" cy="29" r="4.500" fill="#7d8cf2"/></svg></div>
    <div class="app"><svg viewBox="0 0 54 50"><circle cx="27" cy="24" r="21" fill="#f6f6f6"/><circle cx="27" cy="24" r="19.500" fill="#f08a05"/><path d="M26 14c-4-3-9-3-14-2v22c5-1 10-1 14 2zM28 14c4-3 9-3 14-2v22c-5-1-10-1-14 2z" fill="#fff"/></svg></div>
    <div class="app"><svg viewBox="0 0 54 50"><circle cx="27" cy="24" r="21" fill="#eee"/><circle cx="27" cy="24" r="19" fill="#1f7fe0"/><path d="M38 12L24 22l5 5z" fill="#ef3b3b"/><path d="M15 36l9-14 5 5z" fill="#fff"/></svg></div>
    <div class="app"><svg viewBox="0 0 54 50"><circle cx="27" cy="24" r="21" fill="#e8e8e8"/><circle cx="27" cy="24" r="19.500" fill="#1d8cf0"/><path d="M33 11L17 37M21 11l16 26M12 30h30" stroke="#fff" stroke-width="3.500"/><circle cx="41" cy="8" r="10" fill="#ee3b3b"/><text x="41" y="13" class="badge" text-anchor="middle">2</text></svg></div>
    <div class="app run"><svg viewBox="0 0 54 50"><path d="M23 3h7l9 34h6l3 7H7l3-7h5z" fill="#f28b0c"/><path d="M21 13h11l2 9H19zM17 29h19l2 8H15z" fill="#c9c9c9"/></svg></div>
    <div class="app run"><svg viewBox="0 0 54 50"><path d="M27 24L10 14A22 22 0 0 1 46 13z" fill="#d9453a"/><path d="M27 24l19-11A22 22 0 0 1 28 46z" fill="#f2c22c"/><path d="M27 24l1 22A22 22 0 0 1 10 14z" fill="#26994d"/><circle cx="27" cy="24" r="11" fill="#fff"/><circle cx="27" cy="24" r="8.500" fill="#4a86e8"/></svg></div>
    <div class="app"><svg viewBox="0 0 54 50"><rect x="8" y="5" width="37" height="38" rx="1" fill="#fff"/><g fill="#e2574c"><rect x="17" y="14" width="5" height="5"/><rect x="24" y="14" width="5" height="5"/><rect x="31" y="14" width="5" height="5"/></g><g fill="#2fa84f"><rect x="17" y="21" width="5" height="5"/><rect x="31" y="21" width="5" height="5"/><rect x="17" y="28" width="5" height="5"/></g><g fill="#2d7fd3"><rect x="24" y="21" width="5" height="5"/></g><g fill="#f4b400"><rect x="24" y="28" width="5" height="5"/><rect x="31" y="28" width="5" height="5"/></g></svg></div>
    <div class="app run"><svg viewBox="0 0 54 50"><rect x="7" y="3" width="41" height="41" fill="#43b52f"/><path d="M14 13l6-6c8-3 17-2 19 5 3 8 2 19-1 26-4 4-9 2-7-2 3 1 4-1 4-3-4-2-6-3-7-8-6 1-10-1-13-6z" fill="#3c3c3c"/></svg></div>
    <div class="app"><svg viewBox="0 0 54 50"><path d="M5 11L46 4l5 36-41 7z" fill="#f4f2ef"/><path d="M10 42l40-7 1 5-41 7z" fill="#7fc8a9"/><path d="M14 15l27-5 3 14a14 14 0 0 1-27 5z" fill="#e04f5f"/><path d="M23 20l7 6 6-8" fill="none" stroke="#fff" stroke-width="3.500"/></svg></div>
    <div class="app"><svg viewBox="0 0 54 50"><circle cx="27" cy="26" r="21" fill="#f0592a"/><path d="M33 3c12 6 17 20 12 32-4 8-12 12-20 12 10-2 18-10 16-22 0-8-3-16-8-22z" fill="#ffcb1f"/><circle cx="26" cy="26" r="12" fill="#2a4bb8"/><path d="M12 20c8-2 14 2 14 6s-6 7-12 2z" fill="#ff8a1f"/></svg></div>
    <div class="app"><svg viewBox="0 0 54 50"><text transform="translate(1 41) scale(.66 1)" class="ws w">W</text><text transform="translate(33 41) scale(.66 1)" class="ws s">S</text></svg></div>
    <div class="app"><svg viewBox="0 0 54 50"><ellipse cx="25" cy="23" rx="23" ry="16" fill="none" stroke="#b0b0a8" stroke-width="5"/><ellipse cx="25" cy="23" rx="16" ry="10" fill="none" stroke="#8a8a86" stroke-width="3"/><text x="30" y="42" class="r-grey" text-anchor="middle">R</text></svg></div>
    <div class="app"><svg viewBox="0 0 54 50"><path d="M2 24l13-8 7 9-8 6z" fill="#3f8fd0"/><path d="M15 16L31 2l9 26-18-3z" fill="#d9622b"/><path d="M31 2l20 34-8-3-5 13-16-21z" fill="#e98a2c"/><path d="M22 25l4 5 12 16-8-6-16-9z" fill="#a33a1f"/></svg></div>
    <div class="app"><svg viewBox="0 0 54 50"><path d="M4 2h26l20 22v26H4z" fill="#5a5a5a"/><path d="M5 3h25l17 21v24H5z" fill="#f5f5f5"/></svg></div>
    <div class="app"><svg viewBox="0 0 54 50"><path d="M3 8a12 12 0 0 1 17-4 22 22 0 0 1 27 26 12 12 0 0 1-16 17A22 22 0 0 1 4 20 12 12 0 0 1 3 8z" fill="#15abe8"/><text x="26" y="38" class="skype" text-anchor="middle">S</text></svg></div>
    <div class="app run"><svg viewBox="0 0 54 50"><rect x="4" y="4" width="46" height="42" rx="3" fill="#dcdcdc"/><rect x="6" y="4" width="42" height="36" rx="3" fill="#565656"/><path d="M6 34h42v6H6z" fill="#2e2e2e"/><text x="27" y="31" class="subl" text-anchor="middle">S</text></svg></div>
    <div class="app"><svg viewBox="0 0 54 50"><circle cx="27" cy="24" r="21.500" fill="#1da6f2"/><path transform="translate(14 12) scale(1.100)" fill="#fff" d="M23.953 4.570a10 10 0 0 1-2.825.775 4.958 4.958 0 0 0 2.163-2.723c-.951.555-2.005.959-3.127 1.184a4.920 4.920 0 0 0-8.384 4.482C7.690 8.095 4.067 6.130 1.640 3.162a4.822 4.822 0 0 0-.666 2.475c0 1.710.870 3.213 2.188 4.096a4.904 4.904 0 0 1-2.228-.616v.060a4.923 4.923 0 0 0 3.946 4.827 4.996 4.996 0 0 1-2.212.085 4.936 4.936 0 0 0 4.604 3.417 9.867 9.867 0 0 1-6.102 2.105c-.390 0-.779-.023-1.170-.067a13.995 13.995 0 0 0 7.557 2.209c9.053 0 13.998-7.496 13.998-13.985 0-.210 0-.420-.015-.630A9.935 9.935 0 0 0 24 4.590z"/></svg></div>
    <div class="app"><svg viewBox="0 0 54 50"><path d="M4 28C5 10 18 1 32 2c12 1 20 11 19 24-1 8-4 13-8 14l-1 6h-7l-2-8-9 1v7h-9l-2-10c-4 0-9-2-9-8z" fill="#1a77b8"/><path d="M24 8c-1 12 2 22 12 26" fill="none" stroke="#0b4a7d" stroke-width="2"/><circle cx="38" cy="16" r="7" fill="#2d9bd8"/></svg></div>
    <div class="app"><svg viewBox="0 0 54 50"><ellipse cx="27" cy="44" rx="20" ry="4" fill="#4a4a4a"/><circle cx="27" cy="24" r="23" fill="#1a3fb5"/><circle cx="27" cy="24" r="20.500" fill="url(#g-rball)"/><text x="27" y="34" class="r-blue" text-anchor="middle">R</text></svg></div>
    <div class="app"><svg viewBox="0 0 54 50"><rect x="3" y="3" width="48" height="46" rx="6" fill="#1f4f7f"/><path d="M10 10c14 2 20 14 22 24 3 2 6 4 8 9-4-3-7-4-10-3-6-7-11-18-20-30z" fill="none" stroke="#d6e6f2" stroke-width="1.500"/><path d="M40 7l-5 8" stroke="#fff" stroke-width="3"/></svg></div>
    <div class="app"><svg viewBox="0 0 54 50"><rect x="2" y="1" width="50" height="48" rx="2" fill="url(#g-sky)"/><circle cx="24" cy="10" r="5" fill="#000"/><path d="M2 49v-6c6-1 8-3 10-10 2-9 5-17 12-17 6 0 7 7 9 13l6-10 2 1-5 15c2 5 8 8 14 9v5H2z" fill="#000"/><path d="M25 32l7 5-10 5z" fill="#8fd4f5"/></svg></div>
    <div class="app"><svg viewBox="0 0 54 50"><path d="M1 9L39 3l4 31-37 7z" fill="#f4efe4"/><path d="M16 6l5 33" stroke="#6cb0e8" stroke-width="6"/><path d="M25 18l14 8-2-20z" fill="#d8e6b6"/><circle cx="18" cy="26" r="5" fill="#2d7fd3"/><circle cx="36" cy="34" r="13" fill="#e6e6e6" stroke="#aaa"/><text x="36" y="38" class="map3d" text-anchor="middle">3D</text></svg></div>
    <div class="app"><svg viewBox="0 0 54 50"><rect x="6" y="3" width="42" height="41" rx="9" fill="#0cc100"/><path d="M27 10c-9 0-16 5-16 12 0 6 5 10 12 11-1 3 0 4 4 1 8-4 16-7 16-12 0-7-7-12-16-12z" fill="#fff"/><text x="27" y="27" class="line" text-anchor="middle">LINE</text></svg></div>
    <div class="app"><svg viewBox="0 0 54 50"><rect x="9" y="1" width="36" height="48" rx="4" fill="#3c3c3c" stroke="#fff" stroke-width="2"/><path d="M10 12l34 10v-20H14z" fill="#8a8a8a"/><path d="M28 14l4 9 12-1v20l-7-4-8 8-2-10-10-5 9-6z" fill="#8ec5ee"/></svg></div>
    <div class="app"><svg viewBox="0 0 54 50"><circle cx="27" cy="24" r="22.500" fill="#0f8f98"/><path d="M27 24c-4-6-7-8-11-8a8 8 0 0 0 0 16c4 0 7-2 11-8s7-8 11-8a8 8 0 0 1 0 16c-4 0-7-2-11-8z" fill="none" stroke="#fff" stroke-width="3"/><path d="M13 24h6M35 24h6M38 21v6" stroke="#fff" stroke-width="2"/></svg></div>
    <div class="app"><svg viewBox="0 0 54 50"><rect x="9" y="4" width="34" height="30" fill="#fff" stroke="#222" stroke-width="1.500"/><rect x="16" y="13" width="19" height="12" fill="none" stroke="#2332d8" stroke-width="2"/><path d="M29 31l4-4h8l4 4v9l-4 4h-8l-4-4z" fill="#f00000" stroke="#300" stroke-width="1"/></svg></div>
    <div class="app"><svg viewBox="0 0 54 50"><circle cx="27" cy="24" r="21.500" fill="#eceef6"/><path d="M17 12l4 4a16 16 0 0 1 12 0l4-4 1 8c4 6 0 14-7 15v10h-8v-8l-7-1c-3 0-4-3-4-5 2 0 3 2 5 2-2-4-3-9 0-13z" fill="#5f2d91"/></svg></div>
    <div class="app"><svg viewBox="0 0 54 50"><circle cx="27" cy="24" r="21.500" fill="#eee"/><g opacity=".85"><ellipse cx="27" cy="13" rx="5.500" ry="9" fill="#f7a637"/><ellipse cx="27" cy="35" rx="5.500" ry="9" fill="#4fa7e0"/><ellipse cx="16" cy="24" rx="9" ry="5.500" fill="#b088d8"/><ellipse cx="38" cy="24" rx="9" ry="5.500" fill="#8cc63f"/><ellipse cx="19" cy="16" rx="5.500" ry="9" transform="rotate(-45 19 16)" fill="#ed6a5e"/><ellipse cx="35" cy="16" rx="5.500" ry="9" transform="rotate(45 35 16)" fill="#f7d938"/><ellipse cx="19" cy="32" rx="5.500" ry="9" transform="rotate(45 19 32)" fill="#8e92d6"/><ellipse cx="35" cy="32" rx="5.500" ry="9" transform="rotate(-45 35 32)" fill="#48b882"/></g></svg></div>
    <div class="app"><svg viewBox="0 0 54 50"><circle cx="27" cy="24" r="24.500" fill="#ee1a7c"/><text x="27" y="36" class="io-big" text-anchor="middle">io</text></svg></div>
    <div class="app"><svg viewBox="0 0 54 50"><rect x="5" y="3" width="44" height="43" rx="2" fill="#2a2a2a"/><path d="M27 3h22v43H27z" fill="#dcdcdc"/><text x="27" y="41" class="scriv" text-anchor="middle">S</text></svg></div>
    <div class="app"><svg viewBox="0 0 54 50"><rect x="5" y="5" width="44" height="38" rx="2" fill="#2e2e2e" stroke="#777"/><path d="M11 12l5 3-5 3M17 20h6" fill="none" stroke="#fff" stroke-width="1.500"/></svg></div>
    <div class="app"><svg viewBox="0 0 54 50"><path d="M27 2l19 10-2 24-17 12-17-12-2-24z" fill="#e8eef5"/><path d="M27 2l19 10-19 11L8 12z" fill="#1e4a7a"/><path d="M10 16l15 9v16l-13-9zM44 16l-15 9v16l13-9z" fill="#2f6aa5"/><path d="M21 10h12v6H21z" fill="#dfe8f2"/></svg></div>
    <div class="app"><svg viewBox="0 0 54 50"><path d="M32 2L5 8v32l27 7z" fill="#8a3f94"/><path d="M32 8h19v35H32z" fill="#fff"/><path d="M32 14h18M32 20h18M32 26h18M32 32h18M32 38h18" stroke="#444"/><text x="18" y="32" class="one" text-anchor="middle">N</text></svg></div>
    <div class="app"><svg viewBox="0 0 54 50"><rect x="2" y="1" width="50" height="49" fill="#263a3c"/><g fill="#fff"><path d="M27 24L23 3l10 3zM27 24l11-18 9 8zM27 24l21-7 2 11zM27 24l20 9-6 9zM27 24l9 21H24zM27 24L15 43 8 35zM27 24L4 30 3 19zM27 24L9 9l9-4z"/></g><circle cx="27" cy="24" r="6" fill="#263a3c"/></svg></div>
    <div class="app"><svg viewBox="0 0 54 50"><path d="M8 10c0-10 38-10 38 0v30c0 10-38 10-38 0z" fill="url(#g-silver)"/><ellipse cx="27" cy="10" rx="19" ry="7" fill="#ddd"/><path d="M8 19c4 7 34 7 38 0M8 31c4 7 34 7 38 0" fill="none" stroke="#555" stroke-width="2.500"/></svg></div>
    <div class="app run"><svg viewBox="0 0 54 50"><circle cx="27" cy="26" r="22" fill="#2a9fdc"/><path d="M12 26L41 14l-7 25-9-7-4 5-2-8z" fill="#fff"/><path d="M19 29l14-10-10 13z" fill="#c8daea"/><circle cx="43" cy="11" r="10" fill="#ee3b3b"/><text x="43" y="16" class="badge" text-anchor="middle">1</text></svg></div>
    <div class="app"><svg viewBox="0 0 54 50"><path d="M4 10c0-12 46-12 46 0v31c0 12-46 12-46 0z" fill="url(#g-silver)"/><ellipse cx="27" cy="10" rx="23" ry="9" fill="#b5b5b5"/><path d="M4 21c4 8 42 8 46 0M4 33c4 8 42 8 46 0" fill="none" stroke="#666" stroke-width="2"/></svg></div>
    <div class="app"><svg viewBox="0 0 54 50"><path d="M27 1c10 11 13 20 9 33H18C14 21 17 12 27 1z" fill="#45b549"/><circle cx="27" cy="20" r="6" fill="#a7dcc2" stroke="#2c8f4a" stroke-width="1.500"/><path d="M16 22c-5 6-6 12-5 18M38 22c5 6 6 12 5 18M18 34l-2 9M36 34l2 9" fill="none" stroke="#9a9c58" stroke-width="2"/></svg></div>
    <div class="app"><svg viewBox="0 0 54 50"><circle cx="27" cy="24" r="21.500" fill="#fff"/><circle cx="27" cy="24" r="19.500" fill="#5166c4"/><path d="M15 16c8-4 16-4 24 0 3 6 4 12 3 18-3 2-5 2-7 2l-2-3c-4 1-8 1-12 0l-2 3c-2 0-4 0-7-2-1-6 0-12 3-18z" fill="#fff"/><circle cx="22" cy="25" r="3" fill="#5166c4"/><circle cx="32" cy="25" r="3" fill="#5166c4"/></svg></div>
    <div class="app run"><svg viewBox="0 0 54 50"><path d="M5 11l33-5 6 35-33 6z" fill="#fafafa" stroke="#888"/><circle cx="11" cy="16" r="3" fill="#f59a23"/><circle cx="13" cy="25" r="3" fill="#2d9cdb"/><circle cx="14" cy="33" r="3" fill="#45c04a"/><circle cx="16" cy="41" r="3" fill="#b84ad6"/><path d="M17 15l20-3M19 24l20-3M20 32l20-3M22 40l20-3" stroke="#ddd"/><circle cx="41" cy="9" r="10" fill="#ee3b3b"/><text x="41" y="14" class="badge small" text-anchor="middle">17</text></svg></div>
    <div class="app run"><svg viewBox="0 0 54 50"><circle cx="27" cy="24" r="22" fill="#1ed760"/><path d="M13 16c9-3 20-3 29 2M14 24c8-2 18-2 26 2M16 32c7-2 15-1 22 2" fill="none" stroke="#111" stroke-width="3.500"/></svg></div>
    <div class="app run"><svg viewBox="0 0 54 50"><rect x="8" y="3" width="40" height="32" fill="#caa574" stroke="#fff" stroke-width="1.500"/><path d="M1 15l38-6 3 30-37 5z" fill="#7fb3e0" stroke="#fff" stroke-width="1.500"/><path d="M4 32l15-5 20 6 1 6-35 5z" fill="#3a5a80"/><circle cx="39" cy="36" r="10" fill="#8b8b7d" stroke="#444" stroke-width="2"/></svg></div>
    <div class="app run"><svg viewBox="0 0 54 50"><rect x="3" y="3" width="46" height="42" fill="#001d26" stroke="#00c8ff" stroke-width="2"/><text x="26" y="35" class="ps" text-anchor="middle">Ps</text></svg></div>
    <i class="dock-sep"></i>
    <div class="app trash"><svg viewBox="0 0 54 50"><path d="M10 10h34l-4 36a3 3 0 0 1-3 2H17a3 3 0 0 1-3-2z" fill="#e2e2e2"/><ellipse cx="27" cy="10" rx="17" ry="4" fill="#c4c4c4"/><path d="M14 9l5-6 5 5 4-5 5 5 5-3 2 5z" fill="#8a8a8a"/></svg></div>
</footer>

<div class="notice">
    <svg width="84" height="72" viewBox="0 0 84 72"><path d="M5 14a4 4 0 0 1 4-4h28l8 8h30a4 4 0 0 1 4 4v8H5z" fill="#b9d9ef"/><path d="M0 20h84l-3 48a3 3 0 0 1-3 3H6a3 3 0 0 1-3-3z" fill="url(#g-banner)"/><path d="M36 26v28" stroke="#2b76c0" stroke-width="4"/><circle cx="44" cy="48" r="10" fill="none" stroke="#2b76c0" stroke-width="5"/></svg>
    <div class="notice-text">
        <strong>Notification</strong>
        <span>Screenshot copied to clipboard.</span>
    </div>
</div>
</body>
</html>
```

FILE: styles.css
```css
* {
    box-sizing: border-box;
}

html, body {
    height: 100%;
}

body {
    margin: 0;
    width: 2560px;
    height: 1600px;
    overflow: hidden;
    display: flex;
    flex-direction: column;
    background: linear-gradient(90deg, #5a5a5a 0, #2b2b2b 30px, #2b2b2b 2530px, #6a6a6a 100%);
    font-family: "Inter", "Liberation Sans", sans-serif;
    color: #1c1c1c;
}

svg {
    display: block;
    flex: none;
}

.defs {
    height: 0;
}

/* menu bar */
.menubar {
    height: 44px;
    flex: none;
    display: flex;
    align-items: center;
    gap: 37px;
    padding-left: 42px;
    background: #e6e6e6;
    font-size: 27px;
    color: #222;
}

.apple {
    margin-top: -6px;
    margin-right: 4px;
}

.menu-app {
    font-weight: 700;
}

.status {
    margin-left: auto;
    display: flex;
    align-items: center;
    padding-right: 44px;
}

.flag {
    margin-right: 12px;
}

.menu-lang {
    font-size: 23px;
    width: 82px;
}

.menu-clock {
    width: 186px;
    font-size: 27.5px;
}

.menu-search {
    margin-right: 34px;
}

.menu-siri {
    margin-right: 23px;
}

/* window */
.window {
    height: 1480px;
    flex: none;
    display: flex;
    flex-direction: column;
    margin-top: 2px;
    border-radius: 12px;
    overflow: hidden;
    background: #fff;
}

.titlebar {
    height: 118px;
    flex: none;
    background: linear-gradient(#ebebeb, #d3d3d3);
}

.title-row {
    height: 44px;
    display: grid;
    grid-template-columns: 1fr auto 1fr;
    align-items: center;
}

.lights {
    display: flex;
    gap: 16px;
    padding-left: 16px;
}

.light {
    width: 24px;
    height: 24px;
    border-radius: 50%;
}

.red { background: #fc5b57; }
.yellow { background: #fdbb2d; }
.green { background: #2cc93f; }

.title {
    display: flex;
    align-items: center;
    gap: 8px;
    font-size: 26px;
    color: #444;
    margin-left: -6px;
}

.toolbar {
    display: flex;
    align-items: center;
    height: 44px;
    margin-top: 12px;
    padding-left: 16px;
    padding-right: 16px;
}

.tool {
    height: 44px;
    display: flex;
    align-items: center;
    justify-content: center;
    background: #fbfbfb;
    border-radius: 6px;
    box-shadow: 0 1px 1px rgba(0, 0, 0, 0.3);
}

.nav {
    width: 49px;
}

.nav + .nav {
    margin-left: 4px;
}

.views {
    width: 217px;
    margin-left: 290px;
    overflow: hidden;
}

.view {
    height: 44px;
    flex: 1;
    display: flex;
    align-items: center;
    justify-content: center;
    border-left: 1px solid #e2e2e2;
}

.view:first-child {
    border-left: none;
}

.view.on {
    background: #666;
}

.act {
    width: 76px;
    margin-left: 16px;
}

.gear {
    margin-left: 23px;
}

.tool-folder {
    margin-left: 18px;
}

.tool-excel {
    margin-left: 389px;
}

.search {
    margin-left: auto;
    width: 652px;
    height: 44px;
    background: #f4f4f4;
    border-radius: 6px;
}

/* tabs */
.tabs {
    height: 48px;
    flex: none;
    display: grid;
    grid-template-columns: repeat(4, 1fr) 53px;
    background: #b4b4b4;
    border-top: 2px solid #9d9d9d;
    border-bottom: 2px solid #9d9d9d;
}

.tab {
    display: flex;
    align-items: center;
    justify-content: center;
    border-left: 2px solid #9d9d9d;
    color: #666;
    font-size: 22px;
}

.tab.active {
    background: #d5d5d5;
    color: #444;
}

/* sidebar and list */
.content {
    flex: 1;
    display: flex;
    min-height: 0;
}

.sidebar {
    width: 400px;
    flex: none;
    padding-top: 16px;
    border-right: 2px solid #cfcfcf;
    background: linear-gradient(115deg, #cdcdcd 0%, #dfdfdf 50%, #d2d2d2 100%);
}

.sidebar h3 {
    margin: 0 0 4px;
    height: 28px;
    line-height: 28px;
    padding-left: 18px;
    font-size: 21px;
    font-weight: 500;
    color: #6c6c6c;
}

.sidebar h3.gap {
    margin-top: 24px;
}

.side-item {
    height: 52px;
    display: flex;
    align-items: center;
    gap: 12px;
    padding-left: 36px;
    font-size: 25.5px;
    color: #333;
}

.side-item span {
    margin-top: 1px;
}

.side-item svg {
    width: 36px;
    height: 36px;
}

.side-item.selected {
    background: #a0a0a0;
    background-clip: content-box;
    padding-left: 0;
    padding-top: 2px;
    padding-bottom: 2px;
    color: #111;
}

.side-item.selected svg {
    margin-left: 36px;
}

.tag {
    width: 24px;
    height: 24px;
    margin: 0 6px;
    border-radius: 50%;
}

.t-red { background: #f9423a; }
.t-green { background: #54c93f; }
.t-purple { background: #c46fe0; }
.t-orange { background: #fb9a14; }
.t-blue { background: #2f9cf4; }

.listing {
    flex: 1;
    min-width: 0;
    display: flex;
    flex-direction: column;
}

.head {
    height: 46px;
    flex: none;
    display: grid;
    grid-template-columns: 839px 350px 220px 400px 351px;
    background: #efefef;
    border-bottom: 2px solid #cbcbcb;
    font-size: 22px;
    color: #333;
}

.hc {
    display: flex;
    align-items: center;
    justify-content: space-between;
    margin: 4px 0;
    padding: 0 24px 0 22px;
    border-left: 2px solid #dcdcdc;
}

.hc.name {
    padding-left: 12px;
    border-left: none;
}

.rows {
    flex: 1;
    margin-top: 4px;
    overflow: hidden;
}

.row {
    height: 38px;
    display: grid;
    grid-template-columns: 839px 350px 220px 400px 351px;
    align-items: center;
    font-size: 24px;
    color: #717171;
    white-space: nowrap;
}

.row:nth-child(odd) {
    background: #f5f5f5;
}

.row > div {
    padding-left: 19px;
}

.row > .name {
    display: flex;
    align-items: center;
    padding-left: 17px;
    color: #1c1c1c;
}

.row > .num {
    padding-left: 0;
    padding-right: 23px;
    text-align: right;
    font-variant-numeric: tabular-nums;
}

.row > .num.dash {
    font-variant-numeric: normal;
}

.tw {
    width: 14px;
    height: 18px;
    margin-right: 19px;
}

.tw.more {
    border-left: 14px solid #818181;
    border-top: 9px solid transparent;
    border-bottom: 9px solid transparent;
}

.fi {
    width: 36px;
    height: 36px;
    margin-right: 6px;
}

.row.sel {
    background: linear-gradient(#0560da 36px, #fff 36px);
    color: #fff;
}

.row.sel > .name {
    color: #fff;
}

.row.last {
    background: #ebebeb;
}

.row.tail {
    background: #f1f1f1;
}

.io-mark {
    fill: #fff;
    font-size: 20px;
    font-weight: 500;
}

/* dock */
.dock {
    flex: 1;
    display: flex;
    align-items: flex-start;
    width: 2487px;
    margin-left: 37px;
    padding: 9px 0 0 6px;
    background: #787577;
    border-top: 2px solid #141414;
    border-radius: 12px 12px 0 0;
}

.app {
    width: 53.3px;
    flex: none;
}

.app svg {
    width: 54px;
    height: 50px;
    margin-left: -0.35px;
}

.app.run::after {
    content: "";
    display: block;
    width: 6px;
    height: 6px;
    margin: 3px auto 0;
    border-radius: 50%;
    background: #000;
}

.dock-sep {
    width: 2px;
    height: 56px;
    margin: 1px 12px 0 14px;
    background: #4f4d4e;
}

.badge {
    fill: #fff;
    font-size: 14px;
    font-weight: 600;
}

.badge.small {
    font-size: 12px;
}

.ws {
    font-size: 44px;
    font-weight: 800;
}

.ws.w { fill: #1f9ab5; }
.ws.s { fill: #f08a2c; }

.r-grey {
    fill: #5f7299;
    font-size: 38px;
    font-family: "Liberation Serif", serif;
    font-weight: 700;
}

.r-blue {
    fill: #eaf2ff;
    font-size: 28px;
    font-family: "Liberation Serif", serif;
}

.skype {
    fill: #fff;
    font-size: 36px;
    font-weight: 800;
}

.subl {
    fill: #ef8a1f;
    font-size: 24px;
    font-weight: 700;
}

.map3d {
    fill: #555;
    font-size: 9px;
    font-weight: 700;
}

.line {
    fill: #0cc100;
    font-size: 10px;
    font-weight: 800;
}

.io-big {
    fill: #fff;
    font-size: 32px;
    font-weight: 500;
}

.scriv {
    fill: #fff;
    stroke: #555;
    font-size: 44px;
    font-family: "Liberation Serif", serif;
}

.one {
    fill: #fff;
    font-size: 22px;
    font-weight: 500;
}

.ps {
    fill: #00c8ff;
    font-size: 28px;
    font-weight: 500;
}

.avast {
    fill: #eee;
    font-size: 17px;
    font-weight: 700;
}

.xl-x {
    fill: #fff;
    font-size: 18px;
    font-weight: 500;
}

.xl-a {
    fill: #8a8a8a;
    font-size: 20px;
}

/* notification banner */
.notice {
    position: absolute;
    left: 1900px;
    top: 66px;
    width: 640px;
    height: 108px;
    display: flex;
    align-items: center;
    gap: 13px;
    padding-left: 12px;
    background: #1f1f1f;
    border-radius: 14px;
    box-shadow: 0 2px 12px rgba(0, 0, 0, 0.35);
    color: #fff;
}

.notice-text {
    display: flex;
    flex-direction: column;
    gap: 2px;
    margin-top: -8px;
}

.notice-text strong {
    font-size: 28px;
    font-weight: 700;
}

.notice-text span {
    font-size: 24px;
}
```
